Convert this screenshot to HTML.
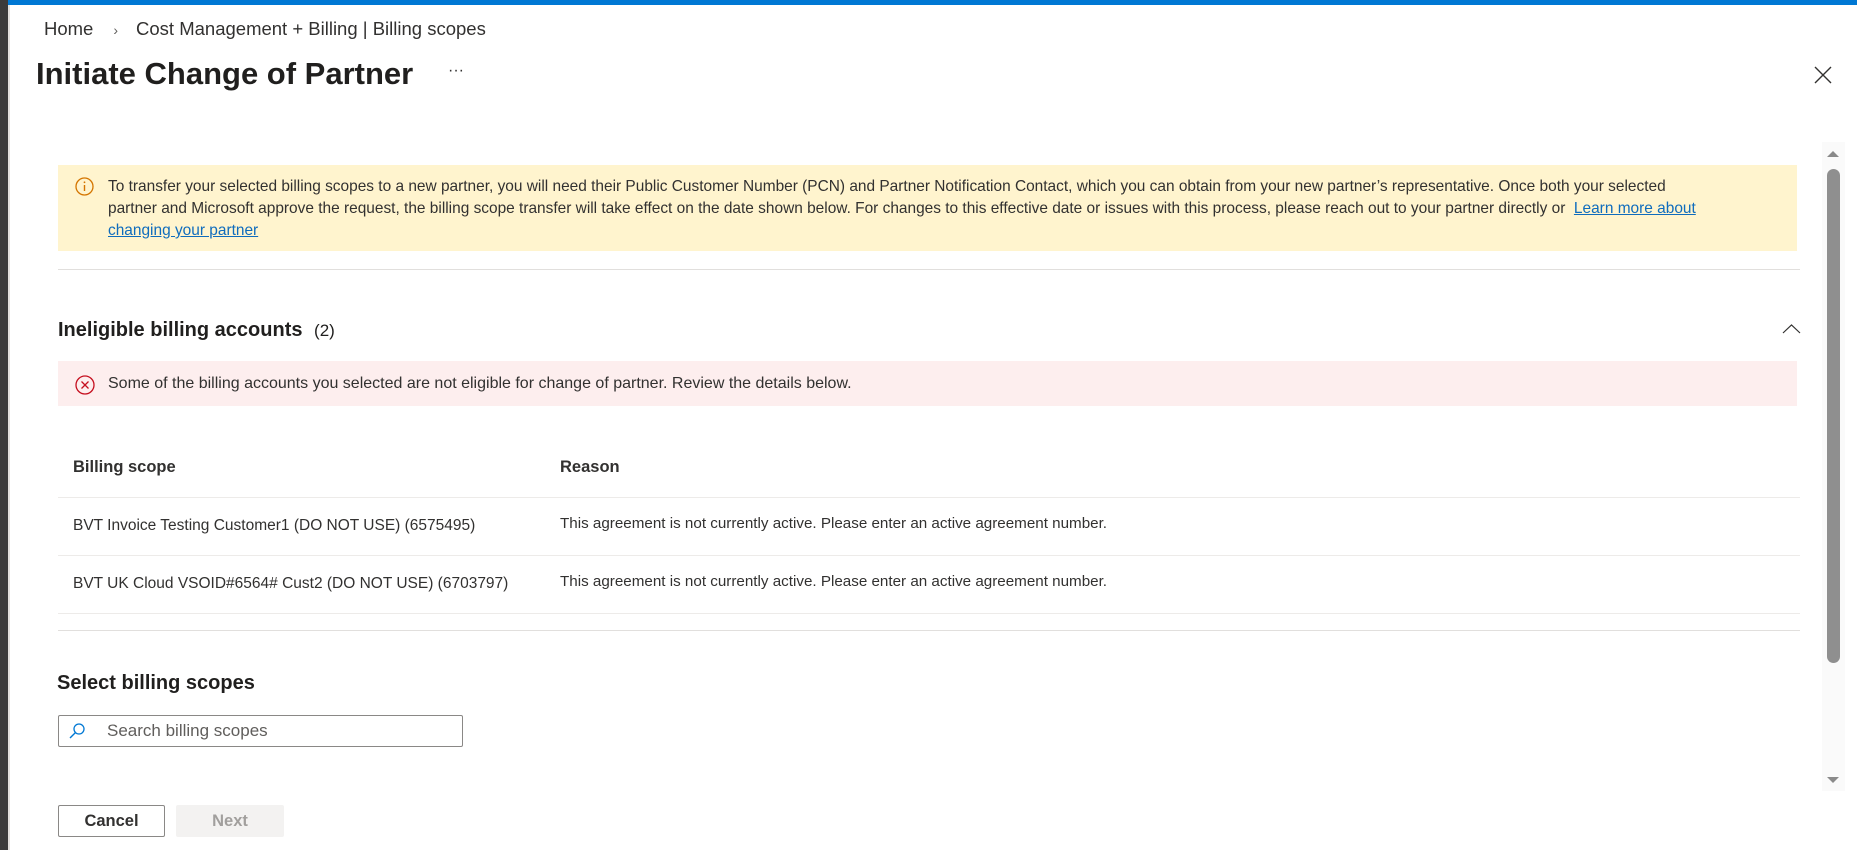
<!DOCTYPE html>
<html><head><meta charset="utf-8"><style>
*{margin:0;padding:0;box-sizing:border-box}
body{width:1857px;height:850px;overflow:hidden;background:#fff;font-family:"Liberation Sans",Arial,sans-serif;color:#323130;position:relative}
.a{position:absolute;white-space:nowrap}
.topbar{left:0;top:0;width:1857px;height:5px;background:#0078d4}
.lstrip{left:0;top:0;width:8px;height:850px;background:#3a3a3a}
.lborder{left:8px;top:5px;width:2px;height:845px;background:#e1dfdd}
.hr{position:absolute;height:1px;background:#e1dfdd}
</style></head><body>
<div class="a topbar"></div>
<div class="a lstrip"></div>
<div class="a lborder"></div>

<div class="a" style="left:44px;top:18px;font-size:18.5px;color:#323130">Home<span style="margin:0 18px 0 20px;color:#605e5c;font-size:14px">›</span>Cost Management + Billing | Billing scopes</div>
<div class="a" style="left:36px;top:56px;font-size:31px;font-weight:600;color:#201f1e">Initiate Change of Partner</div>
<div class="a" style="left:448px;top:62px;font-size:16px;color:#323130">···</div>
<svg class="a" style="left:1814px;top:66px" width="18" height="18" viewBox="0 0 18 18"><path d="M1 1L17 17M17 1L1 17" stroke="#323130" stroke-width="1.4"/></svg>

<div class="a" style="left:58px;top:165px;width:1739px;height:86px;background:#fff4ce"></div>
<svg class="a" style="left:75px;top:177px" width="19" height="19" viewBox="0 0 19 19"><circle cx="9.5" cy="9.5" r="8.5" fill="none" stroke="#d47500" stroke-width="1.3"/><path d="M9.5 8v6" stroke="#d47500" stroke-width="1.4"/><circle cx="9.5" cy="5.3" r="0.9" fill="#d47500"/></svg>
<div class="a" style="left:108px;top:176px;font-size:15.45px;line-height:22px;color:#323130;white-space:nowrap">To transfer your selected billing scopes to a new partner, you will need their Public Customer Number (PCN) and Partner Notification Contact, which you can obtain from your new partner’s representative. Once both your selected<br>partner and Microsoft approve the request, the billing scope transfer will take effect on the date shown below. For changes to this effective date or issues with this process, please reach out to your partner directly or &nbsp;<span style="color:#0f6cbd;text-decoration:underline">Learn more about</span><br><span style="color:#0f6cbd;text-decoration:underline">changing your partner</span></div>

<div class="hr" style="left:58px;top:269px;width:1742px"></div>

<div class="a" style="left:58px;top:319px;font-size:20px;font-weight:600;color:#201f1e">Ineligible billing accounts <span style="font-weight:400;font-size:17px;margin-left:6px">(2)</span></div>
<svg class="a" style="left:1782px;top:324px" width="19" height="10" viewBox="0 0 19 10"><path d="M1 9L9.5 1L18 9" fill="none" stroke="#323130" stroke-width="1.2"/></svg>

<div class="a" style="left:58px;top:361px;width:1739px;height:45px;background:#fdeeee"></div>
<svg class="a" style="left:75px;top:375px" width="20" height="20" viewBox="0 0 20 20"><circle cx="10" cy="10" r="9" fill="none" stroke="#c50f1f" stroke-width="1.3"/><path d="M6.5 6.5L13.5 13.5M13.5 6.5L6.5 13.5" stroke="#c50f1f" stroke-width="1.3"/></svg>
<div class="a" style="left:108px;top:375px;font-size:16px;color:#323130">Some of the billing accounts you selected are not eligible for change of partner. Review the details below.</div>

<div class="a" style="left:73px;top:458px;font-size:16.5px;font-weight:600;color:#323130">Billing scope</div>
<div class="a" style="left:560px;top:458px;font-size:16.5px;font-weight:600;color:#323130">Reason</div>
<div class="hr" style="left:58px;top:497px;width:1742px;background:#edebe9"></div>
<div class="a" style="left:73px;top:517px;font-size:15.5px">BVT Invoice Testing Customer1 (DO NOT USE) (6575495)</div>
<div class="a" style="left:560px;top:515px;font-size:15.2px">This agreement is not currently active. Please enter an active agreement number.</div>
<div class="hr" style="left:58px;top:555px;width:1742px;background:#edebe9"></div>
<div class="a" style="left:73px;top:575px;font-size:15.5px">BVT UK Cloud VSOID#6564# Cust2 (DO NOT USE) (6703797)</div>
<div class="a" style="left:560px;top:573px;font-size:15.2px">This agreement is not currently active. Please enter an active agreement number.</div>
<div class="hr" style="left:58px;top:613px;width:1742px;background:#edebe9"></div>
<div class="hr" style="left:58px;top:630px;width:1742px"></div>

<div class="a" style="left:57px;top:672px;font-size:20px;font-weight:600;color:#201f1e">Select billing scopes</div>
<div class="a" style="left:58px;top:715px;width:405px;height:32px;border:1px solid #8a8886;border-radius:2px"></div>
<svg class="a" style="left:68px;top:722px" width="18" height="18" viewBox="0 0 18 18"><circle cx="11" cy="7" r="5" fill="none" stroke="#0078d4" stroke-width="1.3"/><path d="M7.4 10.6L2 16" stroke="#0078d4" stroke-width="1.4"/></svg>
<div class="a" style="left:107px;top:721px;font-size:17px;color:#605e5c">Search billing scopes</div>

<div class="a" style="left:58px;top:805px;width:107px;height:32px;border:1px solid #8a8886;border-radius:2px;font-size:16.5px;font-weight:600;text-align:center;line-height:30px;color:#323130">Cancel</div>
<div class="a" style="left:176px;top:805px;width:108px;height:32px;background:#f3f2f1;border-radius:2px;font-size:16.5px;font-weight:600;text-align:center;line-height:32px;color:#a19f9d">Next</div>

<div class="a" style="left:1822px;top:142px;width:23px;height:649px;background:#fafafa"></div>
<svg class="a" style="left:1827px;top:150px" width="12" height="8" viewBox="0 0 12 8"><path d="M0 7L6 1L12 7Z" fill="#8a8a8a"/></svg>
<div class="a" style="left:1827px;top:169px;width:13px;height:494px;background:#8f8f8f;border-radius:7px"></div>
<svg class="a" style="left:1827px;top:776px" width="12" height="8" viewBox="0 0 12 8"><path d="M0 1L6 7L12 1Z" fill="#8a8a8a"/></svg>
</body></html>
